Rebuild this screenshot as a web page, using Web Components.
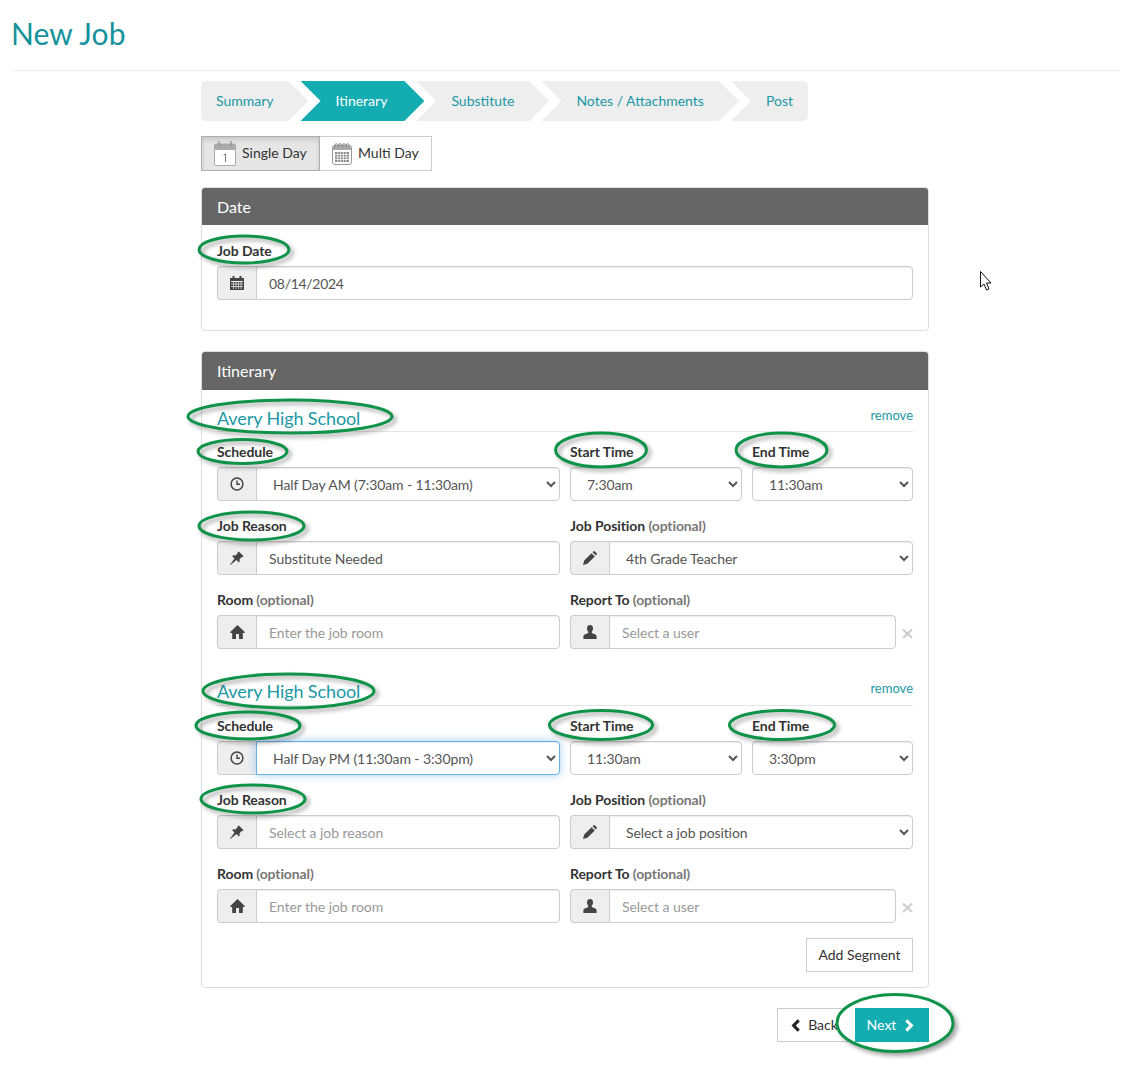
<!DOCTYPE html>
<html lang="en">
<head>
<meta charset="utf-8">
<title>New Job</title>
<style>
  html, body { margin: 0; padding: 0; background: #fff; }
  body { font: 14px/20px Lato, "Liberation Sans", sans-serif; color: #333; }
</style>
</head>
<body>
<job-page>
  <job-wizard>
    <wizard-step>Summary</wizard-step>
    <wizard-step active>Itinerary</wizard-step>
    <wizard-step>Substitute</wizard-step>
    <wizard-step>Notes / Attachments</wizard-step>
    <wizard-step>Post</wizard-step>
  </job-wizard>
  <day-toggle></day-toggle>
  <job-panel heading="Date">
    <date-section></date-section>
  </job-panel>
  <job-panel heading="Itinerary" gap>
    <job-segment schedule="Half Day AM (7:30am - 11:30am)" start="7:30am" end="11:30am" reason="Substitute Needed" position="4th Grade Teacher"></job-segment>
    <job-segment schedule="Half Day PM (11:30am - 3:30pm)" start="11:30am" end="3:30pm" position="Select a job position" focused></job-segment>
    <add-segment></add-segment>
  </job-panel>
  <job-actions></job-actions>
</job-page>
<ring-overlay></ring-overlay>

<script>
// Icons shared by the input groups, drawn on a 14x14 grid
const ICONS = {
  calendar: '<svg viewBox="0 0 14 14" width="14" height="14"><path fill="#444" d="M0 2h2.500V0h2v2h5V0h2v2H14v12H0z"/><path d="M1 5.500h12" stroke="#eee"/><path d="M1 8h12M1 10.500h12M3.500 6v7M6 6v7M8.500 6v7M11 6v7" stroke="#eee" stroke-width=".7"/></svg>',
  clock: '<svg viewBox="0 0 14 14" width="14" height="14"><circle cx="7" cy="7" r="5.900" fill="none" stroke="#444" stroke-width="1.500"/><path d="M7 3.400V7.300H10" fill="none" stroke="#444" stroke-width="1.400"/></svg>',
  pin: '<svg viewBox="0 0 14 14" width="14" height="14"><path fill="#444" d="M8.800.4l4.800 4.800-.9.900-.9-.2-2.300 2.300.2 2.300-.9.900-2.300-2.300L.3 14 0 13.700l4.500-6.200-2.300-2.300.9-.9 2.300.2 2.300-2.300-.2-.9z"/></svg>',
  home: '<svg viewBox="0 0 15 14" width="15" height="14"><path fill="#444" d="M7.500 0L15 7.200l-.9.900H12.800V14H9V9H6v5H2.200V8.100H.9L0 7.200z"/></svg>',
  pencil: '<svg viewBox="0 0 14 14" width="14" height="14"><path fill="#444" d="M0 14l1.200-4.400L8.600 2.200l3.200 3.200-7.400 7.400zM9.600 1.200l.7-.7a1.200 1.200 0 0 1 1.700 0l1.500 1.500a1.200 1.200 0 0 1 0 1.700l-.7.700z"/></svg>',
  user: '<svg viewBox="0 0 14 14" width="14" height="14"><path fill="#444" d="M7 0C5 0 4 1.500 4 3.400c0 1.300.5 2.500 1.200 3.200v1.300L1.200 9.800C.3 10.300.4 11.400.4 14h13.200c0-2.600.1-3.700-.8-4.200L8.800 7.900V6.600C9.500 5.900 10 4.700 10 3.400 10 1.500 9 0 7 0z"/></svg>'
};

// Page shell: title, rule and the job form column
class JobPage extends HTMLElement {
  constructor() {
    super();
    this.attachShadow({ mode: 'open' });
    this.shadowRoot.innerHTML = `
      <style>
        :host { display: block; height: 1066px; overflow: hidden; }
        header { height: 70px; margin: 0 13px 0 11px; border-bottom: 1px solid #eee; }
        h1 { margin: 0; padding: 15px 0 0; font: 400 30px/36px Lato, sans-serif; color: #16929c; letter-spacing: .1px; }
        main { width: 728px; margin-left: 201px; padding-top: 10px; }
      </style>
      <header><h1>New Job</h1></header>
      <main><slot></slot></main>
    `;
  }
}

// Breadcrumb style row of chevron steps
class JobWizard extends HTMLElement {
  constructor() {
    super();
    this.attachShadow({ mode: 'open' });
    this.shadowRoot.innerHTML = `
      <style>
        :host { display: flex; height: 40px; }
        ::slotted(wizard-step:not(:first-child)) { margin-left: -8px; }
      </style>
      <slot></slot>
    `;
  }
}

class WizardStep extends HTMLElement {
  constructor() {
    super();
    this.attachShadow({ mode: 'open' });
    this.shadowRoot.innerHTML = `
      <style>
        :host {
          display: block; height: 40px; line-height: 40px; padding: 0 35px;
          background: #eee; color: #1b98a5;
          clip-path: polygon(0 0, calc(100% - 20px) 0, 100% 50%, calc(100% - 20px) 100%, 0 100%, 20px 50%);
        }
        :host([active]) { background: #13acb1; color: #fff; padding-right: 37px; }
        :host(:first-child) { padding-left: 15px; border-radius: 5px 0 0 5px; clip-path: polygon(0 0, calc(100% - 20px) 0, 100% 50%, calc(100% - 20px) 100%, 0 100%); }
        :host(:last-child) { padding-right: 15px; border-radius: 0 5px 5px 0; clip-path: polygon(0 0, 100% 0, 100% 100%, 0 100%, 20px 50%); }
      </style>
      <slot></slot>
    `;
  }
}

// Single Day / Multi Day switch
class DayToggle extends HTMLElement {
  constructor() {
    super();
    this.attachShadow({ mode: 'open' });
    this.shadowRoot.innerHTML = `
      <style>
        :host { display: flex; height: 35px; margin-top: 15px; color: #333; }
        div { display: flex; align-items: center; box-sizing: border-box; height: 35px; border: 1px solid #ccc; }
        span { padding-bottom: 2px; }
        .on { width: 119px; padding-left: 12px; gap: 6px; background: #e6e6e6; border-color: #adadad; box-shadow: inset 0 3px 5px rgba(0,0,0,.125); }
        .off { width: 112px; padding-left: 12px; gap: 6px; border-left: 0; }
      </style>
      <div class="on">
        <svg viewBox="0 0 22 25" width="22" height="25">
          <rect x="0.500" y="3" width="21" height="21.500" rx="1.500" fill="#fff" stroke="#aaa"/>
          <path d="M0 4.500A1.500 1.500 0 0 1 1.500 3H20.500A1.500 1.500 0 0 1 22 4.500V9H0z" fill="#aaa"/>
          <path d="M5 0V5M17 0V5" stroke="#999" stroke-width="1.500"/>
          <path d="M9.500 14L11.500 13V21" fill="none" stroke="#777"/>
        </svg>
        <span>Single Day</span>
      </div>
      <div class="off">
        <svg viewBox="0 0 20 22" width="20" height="22">
          <rect x="0.500" y="2.500" width="19" height="19" rx="2.500" fill="#fff" stroke="#999"/>
          <path d="M0.500 5A2.500 2.500 0 0 1 3 2.500H17A2.500 2.500 0 0 1 19.500 5V7H0.500z" fill="#aaa"/>
          <path d="M3 4.500V2a1.300 1.300 0 0 1 2.600 0M6.800 4.500V2a1.300 1.300 0 0 1 2.600 0M10.600 4.500V2a1.300 1.300 0 0 1 2.600 0M14.400 4.500V2a1.300 1.300 0 0 1 2.600 0" fill="none" stroke="#888"/>
          <path d="M3 9h14v10H3z" fill="#888"/>
          <path d="M3 11.500h14M3 14h14M3 16.500h14M5.800 9v10M8.600 9v10M11.400 9v10M14.200 9v10" stroke="#fff" stroke-width=".8"/>
        </svg>
        <span>Multi Day</span>
      </div>
    `;
  }
}

// Card with the dark heading bar
class JobPanel extends HTMLElement {
  constructor() {
    super();
    this.attachShadow({ mode: 'open' });
    this.shadowRoot.innerHTML = `
      <style>
        :host { display: block; margin-top: 16px; border: 1px solid #ddd; border-radius: 4px; overflow: hidden; }
        :host([gap]) { margin-top: 20px; }
        .bar { height: 37px; padding-left: 15px; background: #666; color: #fff; font-size: 16px; line-height: 37px; }
        :host([gap]) .bar { height: 38px; }
        .body { padding: 0 15px 15px; }
      </style>
      <div class="bar"></div>
      <div class="body"><slot></slot></div>
    `;
    this.shadowRoot.querySelector('.bar').textContent = this.getAttribute('heading');
  }
}

// One input-group: icon addon followed by a text input or a native select
class InputGroup extends HTMLElement {
  constructor() {
    super();
    this.attachShadow({ mode: 'open' });
    this.shadowRoot.innerHTML = `
      <style>
        :host { display: flex; height: 34px; color: #555; }
        .icon {
          flex: none; width: 39px; display: flex; align-items: center; justify-content: center;
          box-sizing: border-box; background: #eee; border: 1px solid #ccc; border-right: 0;
          border-radius: 4px 0 0 4px;
        }
        input, select {
          flex: 1; min-width: 0; height: 34px; box-sizing: border-box; margin: 0; padding: 0 12px;
          font: 14px Lato, sans-serif; color: #555; background: #fff;
          border: 1px solid #ccc; border-radius: 0 4px 4px 0; outline: 0;
          box-shadow: inset 0 1px 1px rgba(0,0,0,.075);
          letter-spacing: var(--track, -.05px);
        }
        select { padding: 0 9px 0 12px; --track: -.1px; }
        input::placeholder { color: #999; opacity: 1; }
        :host([bare]) select { border-radius: 4px; }
        :host([focused]) select {
          position: relative; border-color: #66afe9;
          box-shadow: inset 0 1px 1px rgba(0,0,0,.075), 0 0 8px rgba(102,175,233,.6);
        }
      </style>
    `;
    const root = this.shadowRoot;
    const icon = this.getAttribute('icon');
    if (icon) {
      const addon = document.createElement('span');
      addon.className = 'icon';
      addon.innerHTML = ICONS[icon];
      root.append(addon);
    }
    const options = this.getAttribute('option');
    if (options) {
      const select = document.createElement('select');
      select.add(new Option(options));
      root.append(select);
    } else {
      const input = document.createElement('input');
      input.type = 'text';
      input.value = this.getAttribute('value') || '';
      input.placeholder = this.getAttribute('placeholder') || '';
      root.append(input);
    }
  }
}

// Label above a control; the note attribute adds "(optional)"
class FormField extends HTMLElement {
  constructor() {
    super();
    this.attachShadow({ mode: 'open' });
    this.shadowRoot.innerHTML = `
      <style>
        :host { display: block; min-width: 0; }
        :host([wide]) { grid-column: span 2; }
        label { display: block; height: 20px; margin-bottom: 5px; font-weight: 700; color: #333; letter-spacing: -.07px; }
        em { font-style: normal; color: #777; letter-spacing: -.12px; }
      </style>
      <label></label>
      <slot></slot>
    `;
    const label = this.shadowRoot.querySelector('label');
    label.textContent = this.getAttribute('label');
    if (this.hasAttribute('note')) {
      const em = document.createElement('em');
      em.textContent = ' (optional)';
      label.append(em);
    }
  }
}

class DateSection extends HTMLElement {
  constructor() {
    super();
    this.attachShadow({ mode: 'open' });
    this.shadowRoot.innerHTML = `
      <style>:host { display: block; padding: 16px 0 15px; --track: -.3px; }</style>
      <form-field label="Job Date">
        <input-group icon="calendar" value="08/14/2024"></input-group>
      </form-field>
    `;
  }
}

// One school block of the itinerary
class JobSegment extends HTMLElement {
  constructor() {
    super();
    this.attachShadow({ mode: 'open' });
    const a = (name) => this.getAttribute(name);
    const reason = a('reason')
      ? `<input-group icon="pin" value="${a('reason')}"></input-group>`
      : `<input-group icon="pin" placeholder="Select a job reason"></input-group>`;
    this.shadowRoot.innerHTML = `
      <style>
        :host { display: block; margin-bottom: 15px; }
        .top {
          display: flex; justify-content: space-between; height: 41px;
          border-bottom: 1px solid #e5e5e5; margin-bottom: 10px;
        }
        .name { align-self: flex-end; font-size: 18px; line-height: 26px; color: #1b98a5; letter-spacing: -.1px; }
        a { align-self: flex-end; font-size: 13px; line-height: 18px; color: #1b98a5; margin-bottom: 7px; }
        :host([focused]) .name { margin-bottom: 1px; }
        :host([focused]) a { margin-bottom: 8px; }
        .grid { display: grid; grid-template-columns: 343px 172px 161px; gap: 15px 10px; }
        .clear { display: flex; align-items: center; gap: 6px; }
        .clear input-group { flex: 1; min-width: 0; }
        .clear svg { flex: none; margin-top: 2px; }
      </style>
      <div class="top"><span class="name">Avery High School</span><a>remove</a></div>
      <div class="grid">
        <form-field label="Schedule"><input-group icon="clock" option="${a('schedule')}" ${a('focused') !== null ? 'focused' : ''}></input-group></form-field>
        <form-field label="Start Time"><input-group bare option="${a('start')}"></input-group></form-field>
        <form-field label="End Time"><input-group bare option="${a('end')}"></input-group></form-field>
        <form-field label="Job Reason">${reason}</form-field>
        <form-field label="Job Position" note wide><input-group icon="pencil" option="${a('position')}"></input-group></form-field>
        <form-field label="Room" note><input-group icon="home" placeholder="Enter the job room"></input-group></form-field>
        <form-field label="Report To" note wide>
          <div class="clear">
            <input-group icon="user" placeholder="Select a user"></input-group>
            <svg viewBox="0 0 11 11" width="11" height="11"><path d="M1 1.500l9 8.500M10 1.500l-9 8.500" stroke="#ccc" stroke-width="2"/></svg>
          </div>
        </form-field>
      </div>
    `;
  }
}

class AddSegment extends HTMLElement {
  constructor() {
    super();
    this.attachShadow({ mode: 'open' });
    this.shadowRoot.innerHTML = `
      <style>
        :host { display: flex; justify-content: flex-end; }
        button { height: 34px; width: 107px; padding: 0 0 2px; font: 14px Lato, sans-serif; color: #333; background: #fff; border: 1px solid #ccc; letter-spacing: -.05px; }
      </style>
      <button>Add Segment</button>
    `;
  }
}

// Back / Next. Next stays above the annotation ring that whites out part of Back
class JobActions extends HTMLElement {
  constructor() {
    super();
    this.attachShadow({ mode: 'open' });
    this.shadowRoot.innerHTML = `
      <style>
        :host { display: flex; justify-content: flex-end; gap: 4px; margin-top: 20px; }
        button {
          display: flex; align-items: center; justify-content: center; gap: 7px;
          width: 74px; height: 34px; padding: 0; font: 14px Lato, sans-serif; border: 1px solid #ccc;
          background: #fff; color: #333;
        }
        span { padding-bottom: 2px; }
        .next { position: relative; z-index: 2; gap: 8px; padding-right: 2px; background: #13acb1; border-color: #13acb1; color: #fff; }
      </style>
      <button>
        <svg viewBox="0 0 12 14" width="11" height="13"><path d="M9.500 1.500L4 7l5.500 5.500" fill="none" stroke="#222" stroke-width="3.400"/></svg>
        <span>Back</span>
      </button>
      <button class="next">
        <span>Next</span>
        <svg viewBox="0 0 12 14" width="11" height="13"><path d="M2.500 1.500L8 7l-5.500 5.500" fill="none" stroke="#fff" stroke-width="3.400"/></svg>
      </button>
    `;
  }
}

// Green hand annotations and the mouse pointer sit on top of the finished page
class RingOverlay extends HTMLElement {
  constructor() {
    super();
    this.attachShadow({ mode: 'open' });
    const rings = [
      [244, 249.5, 45, 13.5], [290, 416.5, 102, 16.5], [242.5, 451.5, 44.5, 12],
      [251.5, 526, 52.5, 14], [601, 450, 45.5, 17], [781.5, 450, 45.5, 17],
      [288.5, 691, 85.5, 17], [248, 725.5, 52, 13.5], [601, 725, 51.5, 14.5],
      [782, 725, 52.5, 14.5], [253, 799, 52, 14]
    ];
    const marks = rings.map(([cx, cy, rx, ry]) =>
      `<ellipse cx="${cx}" cy="${cy}" rx="${rx}" ry="${ry}"/>`).join('');
    this.shadowRoot.innerHTML = `
      <style>
        :host { position: absolute; left: 0; top: 0; width: 1133px; height: 1066px; z-index: 1; pointer-events: none; }
        svg { display: block; }
        ellipse { fill: none; stroke: #0e9349; stroke-width: 3; }
        g { filter: drop-shadow(3px 3px 2px rgba(0,0,0,.35)); }
        .solid { fill: #fff; }
      </style>
      <svg width="1133" height="1066" viewBox="0 0 1133 1066">
        <g>${marks}<ellipse class="solid" cx="895" cy="1023" rx="58" ry="28.5"/></g>
        <path d="M980.500 271.500V287l3.500-3 2.500 6 2.500-1-2.500-6h4.500z" fill="#fff" stroke="#111"/>
      </svg>
    `;
  }
}

customElements.define('job-page', JobPage);
customElements.define('job-wizard', JobWizard);
customElements.define('wizard-step', WizardStep);
customElements.define('day-toggle', DayToggle);
customElements.define('job-panel', JobPanel);
customElements.define('input-group', InputGroup);
customElements.define('form-field', FormField);
customElements.define('date-section', DateSection);
customElements.define('job-segment', JobSegment);
customElements.define('add-segment', AddSegment);
customElements.define('job-actions', JobActions);
customElements.define('ring-overlay', RingOverlay);
</script>
</body>
</html>
